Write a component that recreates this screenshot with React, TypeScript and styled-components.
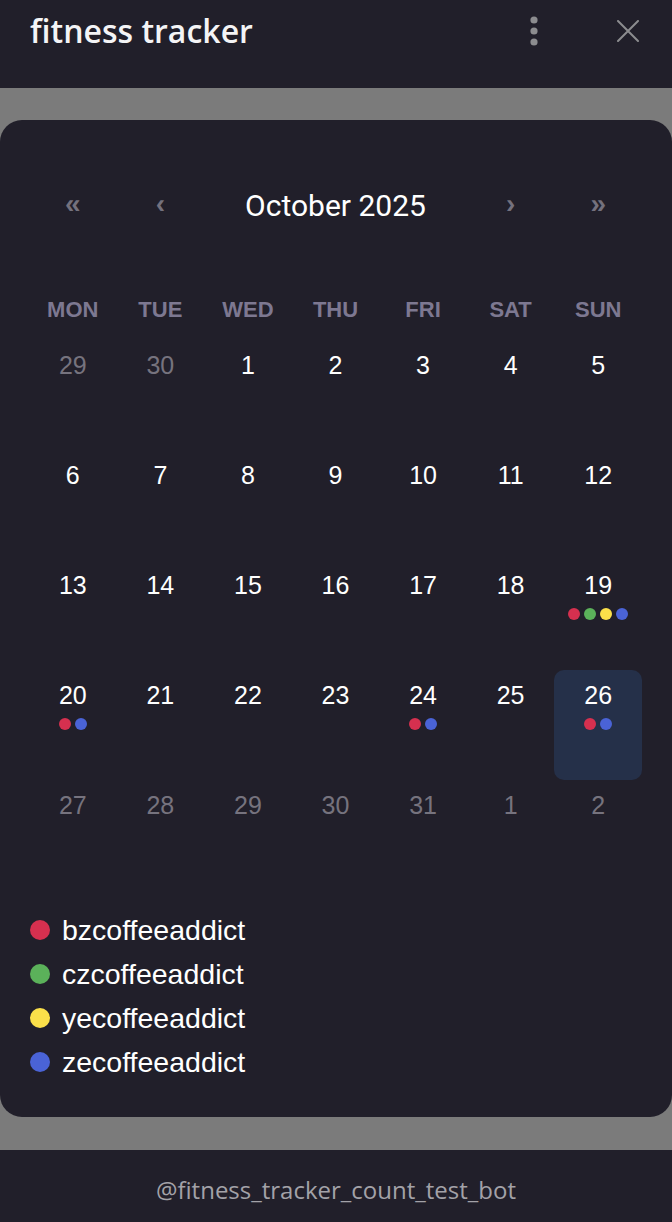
import styled, { createGlobalStyle } from "styled-components"

const GlobalStyle = createGlobalStyle`
  html, body {
    margin: 0;
    padding: 0;
    background: #7b7b7b;
  }
  * { box-sizing: border-box; }
`

const COLORS: Record<string, string> = {
  bz: "#d6304f",
  cz: "#5bb15a",
  ye: "#fbe04a",
  ze: "#4a63d6",
}

const USERS = [
  { key: "bz", name: "bzcoffeeaddict" },
  { key: "cz", name: "czcoffeeaddict" },
  { key: "ye", name: "yecoffeeaddict" },
  { key: "ze", name: "zecoffeeaddict" },
]

type Day = { n: number; muted?: boolean; dots?: string[]; active?: boolean }

const weeks: Day[][] = [
  [{ n: 29, muted: true }, { n: 30, muted: true }, { n: 1 }, { n: 2 }, { n: 3 }, { n: 4 }, { n: 5 }],
  [{ n: 6 }, { n: 7 }, { n: 8 }, { n: 9 }, { n: 10 }, { n: 11 }, { n: 12 }],
  [{ n: 13 }, { n: 14 }, { n: 15 }, { n: 16 }, { n: 17 }, { n: 18 }, { n: 19, dots: ["bz", "cz", "ye", "ze"] }],
  [
    { n: 20, dots: ["bz", "ze"] },
    { n: 21 },
    { n: 22 },
    { n: 23 },
    { n: 24, dots: ["bz", "ze"] },
    { n: 25 },
    { n: 26, dots: ["bz", "ze"], active: true },
  ],
  [{ n: 27, muted: true }, { n: 28, muted: true }, { n: 29, muted: true }, { n: 30, muted: true }, { n: 31, muted: true }, { n: 1, muted: true }, { n: 2, muted: true }],
]

const WEEKDAYS = ["MON", "TUE", "WED", "THU", "FRI", "SAT", "SUN"]

export default function App() {
  return (
    <>
      <GlobalStyle />
      <Page>
        <Header>
          <Title>fitness tracker</Title>
          <HeaderIcons>
            <svg width="12" height="32" viewBox="0 0 12 32">
              <circle cx="6" cy="5" r="3.6" fill="#8c8c8f" />
              <circle cx="6" cy="16" r="3.6" fill="#8c8c8f" />
              <circle cx="6" cy="27" r="3.6" fill="#8c8c8f" />
            </svg>
            <svg width="22" height="22" viewBox="0 0 22 22">
              <path d="M1 1 L21 21 M21 1 L1 21" stroke="#8c8c8f" strokeWidth="2" strokeLinecap="round" />
            </svg>
          </HeaderIcons>
        </Header>
        <Overlay>
          <Card>
            <Nav>
              <Arrow>«</Arrow>
              <Arrow>‹</Arrow>
              <Month>October 2025</Month>
              <Arrow>›</Arrow>
              <Arrow>»</Arrow>
            </Nav>
            <Weekdays>
              {WEEKDAYS.map((w) => (
                <Weekday key={w}>{w}</Weekday>
              ))}
            </Weekdays>
            <Grid>
              {weeks.flat().map((d, i) => (
                <Cell key={i} $active={d.active}>
                  <DayNum $muted={d.muted}>{d.n}</DayNum>
                  {d.dots && (
                    <Dots>
                      {d.dots.map((k) => (
                        <Dot key={k} $color={COLORS[k]} />
                      ))}
                    </Dots>
                  )}
                </Cell>
              ))}
            </Grid>
            <Legend>
              {USERS.map((u) => (
                <LegendRow key={u.key}>
                  <LegendDot $color={COLORS[u.key]} />
                  {u.name}
                </LegendRow>
              ))}
            </Legend>
          </Card>
        </Overlay>
        <Footer>@fitness_tracker_count_test_bot</Footer>
      </Page>
    </>
  )
}

const Page = styled.div`
  width: 672px;
  min-height: 1222px;
  display: flex;
  flex-direction: column;
`

const Header = styled.header`
  height: 88px;
  background: #211f2a;
  display: flex;
  align-items: flex-start;
  justify-content: space-between;
  padding: 10px 33px 0 30px;
`

const Title = styled.h1`
  margin: 0;
  color: #f4f4f6;
  font-family: "Open Sans", sans-serif;
  font-weight: 600;
  font-size: 32px;
  line-height: 42px;
`

const HeaderIcons = styled.div`
  display: flex;
  align-items: center;
  gap: 77px;
  height: 42px;
`

const Overlay = styled.main`
  flex: 1;
  background: #7b7b7b;
  padding: 32px 0 33px;
`

const Card = styled.section`
  background: #211f2a;
  border-radius: 22px;
  height: 997px;
  padding: 57px 30px 0 29px;
  font-family: "Liberation Sans", Arial, sans-serif;
`

const Nav = styled.div`
  display: grid;
  grid-template-columns: repeat(2, 1fr) 3fr repeat(2, 1fr);
  height: 56px;
  align-items: center;
  text-align: center;
`

const Arrow = styled.span`
  color: #74717d;
  font-family: "Liberation Sans", Arial, sans-serif;
  font-weight: 700;
  font-size: 28px;
  padding-bottom: 2px;
`

const Month = styled.span`
  color: #ffffff;
  font-family: "Roboto", sans-serif;
  font-size: 30px;
`

const Weekdays = styled.div`
  display: grid;
  grid-template-columns: repeat(7, 1fr);
  margin-top: 56px;
  height: 40px;
  align-items: center;
  text-align: center;
`

const Weekday = styled.span`
  color: #7d7891;
  font-weight: 700;
  font-size: 22px;
  padding-top: 2px;
`

const Grid = styled.div`
  display: grid;
  grid-template-columns: repeat(7, 1fr);
  grid-auto-rows: 110px;
  margin-top: 11px;
`

const Cell = styled.div<{ $active?: boolean }>`
  display: flex;
  flex-direction: column;
  align-items: center;
  padding-top: 10px;
  border-radius: 10px;
  background: ${(p) => (p.$active ? "#253049" : "transparent")};
`

const DayNum = styled.span<{ $muted?: boolean }>`
  color: ${(p) => (p.$muted ? "#76737e" : "#ffffff")};
  font-size: 25px;
  line-height: 30px;
`

const Dots = styled.div`
  display: flex;
  gap: 4px;
  margin-top: 8px;
`

const Dot = styled.span<{ $color: string }>`
  width: 12px;
  height: 12px;
  border-radius: 50%;
  background: ${(p) => p.$color};
`

const Legend = styled.div`
  display: flex;
  flex-direction: column;
  gap: 12px;
  margin-top: 24px;
  padding-left: 1px;
`

const LegendRow = styled.div`
  display: flex;
  align-items: center;
  gap: 12px;
  color: #ffffff;
  font-size: 28.5px;
  line-height: 32px;
`

const LegendDot = styled.span<{ $color: string }>`
  width: 20px;
  height: 20px;
  border-radius: 50%;
  background: ${(p) => p.$color};
`

const Footer = styled.footer`
  height: 72px;
  background: #211f2a;
  display: flex;
  align-items: center;
  justify-content: center;
  color: #a3a2a8;
  font-family: "Open Sans", sans-serif;
  font-size: 24px;
  padding-top: 6px;
`
